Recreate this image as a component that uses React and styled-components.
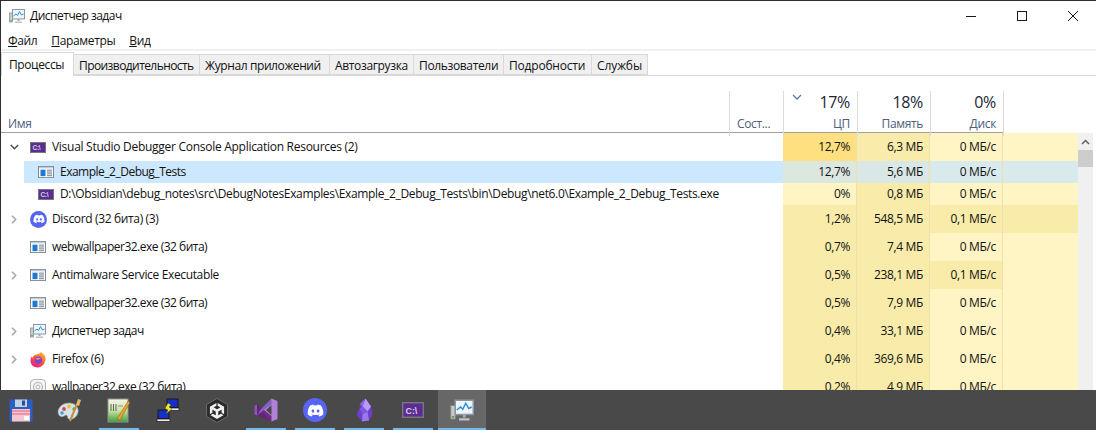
import styled, { createGlobalStyle } from "styled-components";
import { FaDiscord } from "react-icons/fa";
import { SiUnity } from "react-icons/si";

const GlobalStyle = createGlobalStyle`
  html, body {
    margin: 0;
    background: #fff;
  }
  * {
    box-sizing: border-box;
  }
  body {
    font-family: "Open Sans", "Noto Sans", sans-serif;
    font-size: 12px;
    color: #111;
  }
`;

const Screen = styled.div`
  width: 1096px;
  height: 430px;
  overflow: hidden;
  display: flex;
  flex-direction: column;
`;
const Window = styled.div`
  height: 390px;
  overflow: hidden;
  border-top: 1px solid #2e2e2e;
  border-left: 1px solid #2e2e2e;
  display: flex;
  flex-direction: column;
`;
const TitleBar = styled.div`
  height: 29px;
  flex: none;
  display: flex;
  align-items: center;
  padding-left: 8px;
  gap: 5px;
`;
const TitleText = styled.div`
  flex: 1;
  letter-spacing: -0.5px;
`;
const WinButton = styled.div`
  width: 46px;
  height: 29px;
  display: flex;
  align-items: center;
  justify-content: center;
`;
const MenuBar = styled.div`
  height: 21px;
  flex: none;
  display: flex;
  padding-left: 7px;
  gap: 14px;
  align-items: center;
  border-bottom: 2px solid #f0f0f0;
  padding-top: 2px;
`;
const MenuItem = styled.div`
  letter-spacing: -0.35px;
`;
const TabStrip = styled.div`
  height: 25px;
  flex: none;
  display: flex;
  align-items: flex-end;
  border-bottom: 1px solid #d9d9d9;
`;
const Tab = styled.div`
  width: ${(p) => p.$w}px;
  height: ${(p) => (p.$active ? 24 : 21)}px;
  margin-bottom: ${(p) => (p.$active ? -1 : 0)}px;
  background: ${(p) => (p.$active ? "#fff" : "#f0f0f0")};
  border: 1px solid #d9d9d9;
  border-bottom: ${(p) => (p.$active ? "none" : "1px solid #d9d9d9")};
  border-left: ${(p) => (p.$first ? "1px solid #d9d9d9" : "none")};
  padding-left: ${(p) => (p.$active ? 7 : 5)}px;
  padding-bottom: ${(p) => (p.$active ? 1 : 0)}px;
  padding-top: ${(p) => (p.$active ? 0 : 2)}px;
  display: flex;
  align-items: center;
  letter-spacing: ${(p) => p.$ls}px;
  white-space: nowrap;
`;
const Header = styled.div`
  height: 57px;
  flex: none;
  display: grid;
  grid-template-columns: 729px 54px 74px 73px 73px;
  width: 1003px;
  padding-top: 15px;
  border-bottom: 1px solid #a0a0a0;
`;
const HeadCell = styled.div`
  border-right: 1px solid #dcdcdc;
  display: flex;
  flex-direction: column;
  align-items: ${(p) => (p.$left ? "flex-start" : "flex-end")};
  justify-content: flex-end;
  padding: 0 7px 3px 7px;
  position: relative;
`;
const HeadPercent = styled.div`
  font-size: 16px;
  line-height: 22px;
  color: #1c2733;
  letter-spacing: -0.3px;
  margin-bottom: 2px;
`;
const HeadLabel = styled.div`
  line-height: 18px;
  color: #4c607a;
  letter-spacing: -0.35px;
`;
const SortMark = styled.svg`
  position: absolute;
  left: 8px;
  top: 3px;
`;
const Body = styled.div`
  flex: 1;
  display: flex;
  min-height: 0;
`;
const Rows = styled.div`
  width: 1077px;
  flex: none;
`;
const Row = styled.div`
  height: ${(p) => p.$h}px;
  display: grid;
  grid-template-columns: 782px 74px 73px 73px 75px;
`;
const NameCell = styled.div`
  display: flex;
  align-items: center;
  padding-left: ${(p) => (p.$child ? 23 : 0)}px;
  min-width: 0;
`;
const NameBand = styled.div`
  flex: 1;
  height: 100%;
  display: flex;
  align-items: center;
  background: ${(p) => (p.$selected ? "#cce8ff" : "transparent")};
  padding-left: ${(p) => (p.$child ? 14 : 0)}px;
  white-space: nowrap;
  letter-spacing: ${(p) => p.$ls}px;
`;
const NameText = styled.span`
  padding-bottom: 1px;
`;
const Twist = styled.div`
  width: 29px;
  flex: none;
  display: flex;
  align-items: center;
  padding-left: ${(p) => (p.$open ? 9 : 10)}px;
`;
const IconSlot = styled.div`
  width: 22px;
  flex: none;
  display: flex;
  align-items: center;
`;
const DataCell = styled.div`
  background: ${(p) => p.$bg};
  border-right: ${(p) => (p.$plain ? "none" : "1px solid #f2dfae")};
  display: flex;
  align-items: center;
  justify-content: flex-end;
  padding: 0 6px 1px 0;
  letter-spacing: -0.35px;
  white-space: nowrap;
`;
const ScrollTrack = styled.div`
  width: 15px;
  flex: none;
  background: #f0f0f0;
  display: flex;
  flex-direction: column;
`;
const ScrollArrow = styled.div`
  height: 17px;
  display: flex;
  align-items: center;
  justify-content: center;
`;
const ScrollThumb = styled.div`
  height: 17px;
  background: #cdcdcd;
`;
const Taskbar = styled.div`
  height: 40px;
  flex: none;
  background: #494949;
  display: flex;
  gap: 1px;
`;
const DockItem = styled.div`
  width: 48px;
  height: 40px;
  flex: none;
  position: relative;
  display: flex;
  align-items: center;
  justify-content: center;
  background: ${(p) => (p.$active ? "#676767" : "transparent")};
  margin-left: ${(p) => (p.$first ? -3 : 0)}px;
  &::after {
    content: "";
    display: ${(p) => (p.$open ? "block" : "none")};
    position: absolute;
    bottom: 0;
    left: ${(p) => (p.$active ? 0 : 4)}px;
    right: ${(p) => (p.$active ? 0 : 4)}px;
    height: 2px;
    background: #76b9ed;
  }
`;
const DiscordDisc = styled.div`
  width: ${(p) => p.$size}px;
  height: ${(p) => p.$size}px;
  border-radius: 50%;
  background: #5865f2;
  color: #fff;
  display: flex;
  align-items: center;
  justify-content: center;
  font-size: ${(p) => Math.round(p.$size * 0.72)}px;
`;

const Chevron = ({ open }) =>
  open ? (
    <svg width="9" height="6" viewBox="0 0 9 6">
      <path d="M0.800 1l3.700 3.700L8.200 1" fill="none" stroke="#4d4d4d" strokeWidth="1.500" />
    </svg>
  ) : (
    <svg width="6" height="9" viewBox="0 0 6 9">
      <path d="M1 0.800l3.700 3.700L1 8.200" fill="none" stroke="#a6a6a6" strokeWidth="1.500" />
    </svg>
  );

const AppWindowIcon = () => (
  <svg width="16" height="12" viewBox="0 0 16 13" preserveAspectRatio="none">
    <rect x="0.500" y="0.500" width="15" height="12" fill="#fff" stroke="#7d8a96" />
    <rect x="1" y="1" width="14" height="1.500" fill="#c2cad2" />
    <rect x="2.500" y="4" width="5" height="7" fill="#1f78d1" />
    <path d="M9 4.500h5M9 6.500h5M9 8.500h5M9 10.500h5" stroke="#6e7c88" />
  </svg>
);

const ConsoleIcon = ({ width = 16, height = 11 }) => (
  <svg width={width} height={height} viewBox="0 0 16 11" preserveAspectRatio="none">
    <rect x="0.500" y="0.500" width="15" height="10" fill="#5c2d91" stroke="#77777f" />
    <text x="2.500" y="8" fontSize="6.500" fontFamily="Liberation Sans, sans-serif" fontWeight="700" fill="#d9d0e6">
      C:\
    </text>
  </svg>
);

const TaskManagerIcon = ({ size = 16 }) => (
  <svg width={size} height={size} viewBox="0 0 16 16">
    <rect x="0.500" y="5" width="3" height="9" fill="#c9cdc8" stroke="#7f8a80" strokeWidth="0.700" />
    <rect x="1.200" y="12" width="1.600" height="1.200" fill="#58a858" />
    <rect x="3.500" y="1.500" width="12" height="9.500" fill="#eef5fb" stroke="#8b98a3" />
    <path d="M4.500 8l2.500-2 1.500 1.500 2-4 2 3.500 2-1" fill="none" stroke="#2e8fd8" strokeWidth="1" />
    <path d="M8.500 11h2v2h-2z" fill="#a3acb3" />
    <path d="M6 13.500h7v1.500H6z" fill="#bcc4ca" />
  </svg>
);

const FirefoxIcon = () => (
  <svg width="17" height="17" viewBox="0 0 17 17">
    <defs>
      <linearGradient id="ffBody" x1="0.8" y1="0" x2="0.2" y2="1">
        <stop offset="0" stopColor="#ffbd2e" />
        <stop offset="0.500" stopColor="#ff5a36" />
        <stop offset="1" stopColor="#e31587" />
      </linearGradient>
    </defs>
    <path d="M11 0.500c0.600 1.600 3 2.600 4 4.600 1.500 3-0.200 11-7 11.400C3.500 16.700 0.500 13.500 0.500 9.500c0-1.400 0.400-3 1.200-4 0 0.800 0.300 1.300 0.800 1.600C3.300 4.600 5 3.600 6.600 3.400 8.800 3.100 10.800 2.300 11 0.500z" fill="url(#ffBody)" />
    <circle cx="8.400" cy="9.200" r="3.600" fill="#7542e5" />
    <path d="M5.400 7.800c1.600-1.400 4.200-1.200 5.600 0.400-1.500-0.300-2.500 0.100-3 0.800z" fill="#ff9a3c" />
  </svg>
);

const WallpaperIcon = () => (
  <svg width="16" height="16" viewBox="0 0 16 16">
    <rect x="0.500" y="0.500" width="15" height="15" rx="3.500" fill="#f4f4f4" stroke="#b5b5b5" />
    <circle cx="8" cy="8" r="4.500" fill="none" stroke="#b5b5b5" strokeWidth="1.200" />
    <circle cx="8" cy="8" r="2" fill="none" stroke="#b5b5b5" />
  </svg>
);

const FloppyIcon = () => (
  <svg width="24" height="24" viewBox="0 0 24 24">
    <path d="M0.500 1.500h23v22h-23z" fill="#2a5fc4" />
    <rect x="6" y="1.500" width="12" height="7.500" fill="#c3d0e8" />
    <rect x="13" y="2.500" width="3" height="5" fill="#2a4f96" />
    <rect x="3" y="11" width="18" height="12.500" fill="#f7c6cf" />
    <path d="M3 13h18M3 16h18" stroke="#e2607a" strokeWidth="1" />
    <rect x="15" y="18" width="5" height="4" fill="#fff" />
  </svg>
);

const PaletteIcon = () => (
  <svg width="26" height="26" viewBox="0 0 26 26">
    <path d="M12 6C5 6 1 11 1 15c0 4 4 6 6 4 2-1.500 3.500-1 3.500 1 0 2 2.500 3 5 2 4-1.500 6.500-6 5.500-10-1-4-5-6-9-6z" fill="#d8e2ea" stroke="#8a9aa8" strokeWidth="0.600" />
    <circle cx="7" cy="12" r="1.900" fill="#e04a3c" />
    <circle cx="12" cy="9.500" r="1.900" fill="#e8c43c" />
    <circle cx="5" cy="16" r="1.700" fill="#3c9fe0" />
    <circle cx="17" cy="12" r="1.700" fill="#57b04a" />
    <path d="M13 24l7-17" stroke="#c98b3c" strokeWidth="2" />
    <path d="M19 8l2-6 3 1-2 6z" fill="#e8b86a" />
  </svg>
);

const NotepadIcon = () => (
  <svg width="24" height="25" viewBox="0 0 24 25">
    <defs>
      <linearGradient id="noteFill" x1="0" y1="0" x2="0" y2="1">
        <stop offset="0" stopColor="#f2f5ea" />
        <stop offset="0.500" stopColor="#cfe3a8" />
        <stop offset="1" stopColor="#3f9d3c" />
      </linearGradient>
    </defs>
    <rect x="1" y="1" width="20" height="23" fill="url(#noteFill)" stroke="#8c948c" />
    <path d="M4 6v7M6.500 6v7M9 6v7" stroke="#5e665e" strokeWidth="1" />
    <path d="M11 8h5" stroke="#8c948c" />
    <path d="M10 21L21 3l2 1.500L13 22z" fill="#e8a52e" stroke="#8a5a1a" strokeWidth="0.500" />
  </svg>
);

const NetworkIcon = () => (
  <svg width="24" height="24" viewBox="0 0 24 24">
    <rect x="11" y="1" width="11" height="8.500" fill="#1530c8" stroke="#1a1a1a" />
    <path d="M10 10h13v2.500H10z" fill="#e8e8e8" stroke="#1a1a1a" strokeWidth="0.700" />
    <rect x="2" y="12" width="11" height="8.500" fill="#1530c8" stroke="#1a1a1a" />
    <path d="M1 21h13v2.500H1z" fill="#e8e8e8" stroke="#1a1a1a" strokeWidth="0.700" />
    <path d="M12 5l3 2-2 2 3 2-6 5 2-4-3-1.500z" fill="#f5e72e" stroke="#3a3a10" strokeWidth="0.400" />
  </svg>
);

const UnityIcon = () => (
  <svg width="22" height="25" viewBox="0 0 22 25">
    <path d="M11 0.500l10.500 6v12L11 24.500 0.500 18.500v-12z" fill="#2b2b2b" stroke="#777" strokeWidth="0.800" />
    <foreignObject x="3" y="4.500" width="16" height="16">
      <SiUnity size={16} color="#f0f0f0" />
    </foreignObject>
  </svg>
);

const VisualStudioIcon = () => (
  <svg width="24" height="24" viewBox="0 0 24 24">
    <path d="M17.500 0.500L23.500 3v18l-6 2.500L7 13.500z" fill="#b180d7" />
    <path d="M17.500 7l-5.500 5 5.500 5z" fill="#494949" />
    <path d="M0.500 7.500L3 6.500l14.500 11.500v5.500L3 17.500 0.500 16.500z" fill="#68217a" opacity="0.900" />
    <path d="M0.500 7.500L3 6.500v11L0.500 16.500z" fill="#8a56b8" />
    <path d="M3 17.500L17.500 6V0.500L7 11z" fill="#865fc5" />
  </svg>
);

const ObsidianIcon = () => (
  <svg width="17" height="24" viewBox="0 0 17 24">
    <path d="M9.500 0.500L4 6 3.500 11 0.500 16.500 6 23.500l7-1 3.500-6-1.500-8z" fill="#6d3fd0" />
    <path d="M9.500 0.500L6.500 8.500l5 5 3.500-5z" fill="#b79cf5" />
    <path d="M4 6l2.500 2.500 3-8z" fill="#8f6ce8" />
    <path d="M6.500 8.500L3.500 11l3 5.500 5-3z" fill="#8157df" />
    <path d="M6 23.500l.500-7 5-3 1.500 9z" fill="#9a78ec" />
  </svg>
);

const ScrollUp = () => (
  <svg width="9" height="6" viewBox="0 0 9 6">
    <path d="M1 5l3.500-3.500L8 5" fill="none" stroke="#606060" strokeWidth="1.500" />
  </svg>
);

const tabs = [
  { name: "Процессы", w: 73, active: true, first: true, ls: -0.4 },
  { name: "Производительность", w: 126, ls: -0.58 },
  { name: "Журнал приложений", w: 130, ls: -0.4 },
  { name: "Автозагрузка", w: 84, ls: -0.35 },
  { name: "Пользователи", w: 90, ls: -0.35 },
  { name: "Подробности", w: 88, ls: -0.2 },
  { name: "Службы", w: 56, ls: -0.1 },
];

const idle = "#fff4c4";
const warm = "#f9ecaa";
const sel = "#d9eaec";

const rows = [
  { h: 28, twist: "open", ls: -0.28, icon: <ConsoleIcon />, name: "Visual Studio Debugger Console Application Resources (2)", cpu: "12,7%", mem: "6,3 МБ", disk: "0 МБ/с", cpuBg: "#ffe080", memBg: warm, diskBg: idle, powBg: idle },
  { h: 22, child: true, selected: true, ls: -0.5, icon: <AppWindowIcon />, name: "Example_2_Debug_Tests", cpu: "12,7%", mem: "5,6 МБ", disk: "0 МБ/с", cpuBg: "#dbe7df", memBg: "#d9e8e6", diskBg: sel, powBg: sel },
  { h: 22, child: true, ls: -0.35, icon: <ConsoleIcon />, name: "D:\\Obsidian\\debug_notes\\src\\DebugNotesExamples\\Example_2_Debug_Tests\\bin\\Debug\\net6.0\\Example_2_Debug_Tests.exe", cpu: "0%", mem: "0,8 МБ", disk: "0 МБ/с", cpuBg: idle, memBg: warm, diskBg: idle, powBg: idle },
  { h: 28, twist: "closed", ls: -0.35, icon: <DiscordDisc $size={17}><FaDiscord /></DiscordDisc>, name: "Discord (32 бита) (3)", cpu: "1,2%", mem: "548,5 МБ", disk: "0,1 МБ/с", cpuBg: warm, memBg: warm, diskBg: warm, powBg: warm },
  { h: 28, ls: -0.5, icon: <AppWindowIcon />, name: "webwallpaper32.exe (32 бита)", cpu: "0,7%", mem: "7,4 МБ", disk: "0 МБ/с", cpuBg: warm, memBg: warm, diskBg: idle, powBg: idle },
  { h: 28, twist: "closed", ls: -0.35, icon: <AppWindowIcon />, name: "Antimalware Service Executable", cpu: "0,5%", mem: "238,1 МБ", disk: "0,1 МБ/с", cpuBg: warm, memBg: warm, diskBg: warm, powBg: idle },
  { h: 28, ls: -0.5, icon: <AppWindowIcon />, name: "webwallpaper32.exe (32 бита)", cpu: "0,5%", mem: "7,9 МБ", disk: "0 МБ/с", cpuBg: warm, memBg: warm, diskBg: idle, powBg: idle },
  { h: 28, twist: "closed", ls: -0.5, icon: <TaskManagerIcon />, name: "Диспетчер задач", cpu: "0,4%", mem: "33,1 МБ", disk: "0 МБ/с", cpuBg: warm, memBg: warm, diskBg: idle, powBg: idle },
  { h: 28, twist: "closed", ls: -0.35, icon: <FirefoxIcon />, name: "Firefox (6)", cpu: "0,4%", mem: "369,6 МБ", disk: "0 МБ/с", cpuBg: warm, memBg: warm, diskBg: idle, powBg: idle },
  { h: 28, ls: -0.5, icon: <WallpaperIcon />, name: "wallpaper32.exe (32 бита)", cpu: "0,2%", mem: "4,9 МБ", disk: "0 МБ/с", cpuBg: warm, memBg: warm, diskBg: idle, powBg: idle },
];

const dock = [
  { icon: <FloppyIcon />, first: true },
  { icon: <PaletteIcon /> },
  { icon: <NotepadIcon />, open: true },
  { icon: <NetworkIcon /> },
  { icon: <UnityIcon /> },
  { icon: <VisualStudioIcon />, open: true },
  { icon: <DiscordDisc $size={24}><FaDiscord /></DiscordDisc>, open: true },
  { icon: <ObsidianIcon />, open: true },
  { icon: <ConsoleIcon width={22} height={16} />, open: true },
  { icon: <TaskManagerIcon size={24} />, open: true, active: true },
];

const ProcessRow = ({ row }) => (
  <Row $h={row.h}>
    <NameCell $child={row.child}>
      {!row.child && (
        <Twist $open={row.twist === "open"}>
          {row.twist && <Chevron open={row.twist === "open"} />}
        </Twist>
      )}
      <NameBand $selected={row.selected} $child={row.child} $ls={row.ls}>
        <IconSlot>{row.icon}</IconSlot>
        <NameText>{row.name}</NameText>
      </NameBand>
    </NameCell>
    <DataCell $bg={row.cpuBg}>{row.cpu}</DataCell>
    <DataCell $bg={row.memBg}>{row.mem}</DataCell>
    <DataCell $bg={row.diskBg}>{row.disk}</DataCell>
    <DataCell $bg={row.powBg} $plain />
  </Row>
);

const App = () => (
  <Screen>
    <GlobalStyle />
    <Window>
      <TitleBar>
        <TaskManagerIcon />
        <TitleText>Диспетчер задач</TitleText>
        <WinButton>
          <svg width="10" height="10" viewBox="0 0 10 10">
            <path d="M0 5.500h10" stroke="#1a1a1a" />
          </svg>
        </WinButton>
        <WinButton>
          <svg width="10" height="10" viewBox="0 0 10 10">
            <rect x="0.500" y="0.500" width="9" height="9" fill="none" stroke="#1a1a1a" />
          </svg>
        </WinButton>
        <WinButton>
          <svg width="10" height="10" viewBox="0 0 10 10">
            <path d="M0 0l10 10M10 0L0 10" stroke="#1a1a1a" />
          </svg>
        </WinButton>
      </TitleBar>
      <MenuBar>
        <MenuItem><u>Ф</u>айл</MenuItem>
        <MenuItem><u>П</u>араметры</MenuItem>
        <MenuItem><u>В</u>ид</MenuItem>
      </MenuBar>
      <TabStrip>
        {tabs.map((tab) => (
          <Tab key={tab.name} $w={tab.w} $active={tab.active} $first={tab.first} $ls={tab.ls}>
            {tab.name}
          </Tab>
        ))}
      </TabStrip>
      <Header>
        <HeadCell $left>
          <HeadLabel>Имя</HeadLabel>
        </HeadCell>
        <HeadCell $left>
          <HeadLabel>Сост...</HeadLabel>
        </HeadCell>
        <HeadCell>
          <SortMark width="10" height="6" viewBox="0 0 10 6">
            <path d="M1 1l4 4 4-4" fill="none" stroke="#5b7a9a" strokeWidth="1.300" />
          </SortMark>
          <HeadPercent>17%</HeadPercent>
          <HeadLabel>ЦП</HeadLabel>
        </HeadCell>
        <HeadCell>
          <HeadPercent>18%</HeadPercent>
          <HeadLabel>Память</HeadLabel>
        </HeadCell>
        <HeadCell>
          <HeadPercent>0%</HeadPercent>
          <HeadLabel>Диск</HeadLabel>
        </HeadCell>
      </Header>
      <Body>
        <Rows>
          {rows.map((row, i) => (
            <ProcessRow key={i} row={row} />
          ))}
        </Rows>
        <ScrollTrack>
          <ScrollArrow>
            <ScrollUp />
          </ScrollArrow>
          <ScrollThumb />
        </ScrollTrack>
      </Body>
    </Window>
    <Taskbar>
      {dock.map((item, i) => (
        <DockItem key={i} $first={item.first} $open={item.open} $active={item.active}>
          {item.icon}
        </DockItem>
      ))}
    </Taskbar>
  </Screen>
);

export default App;
